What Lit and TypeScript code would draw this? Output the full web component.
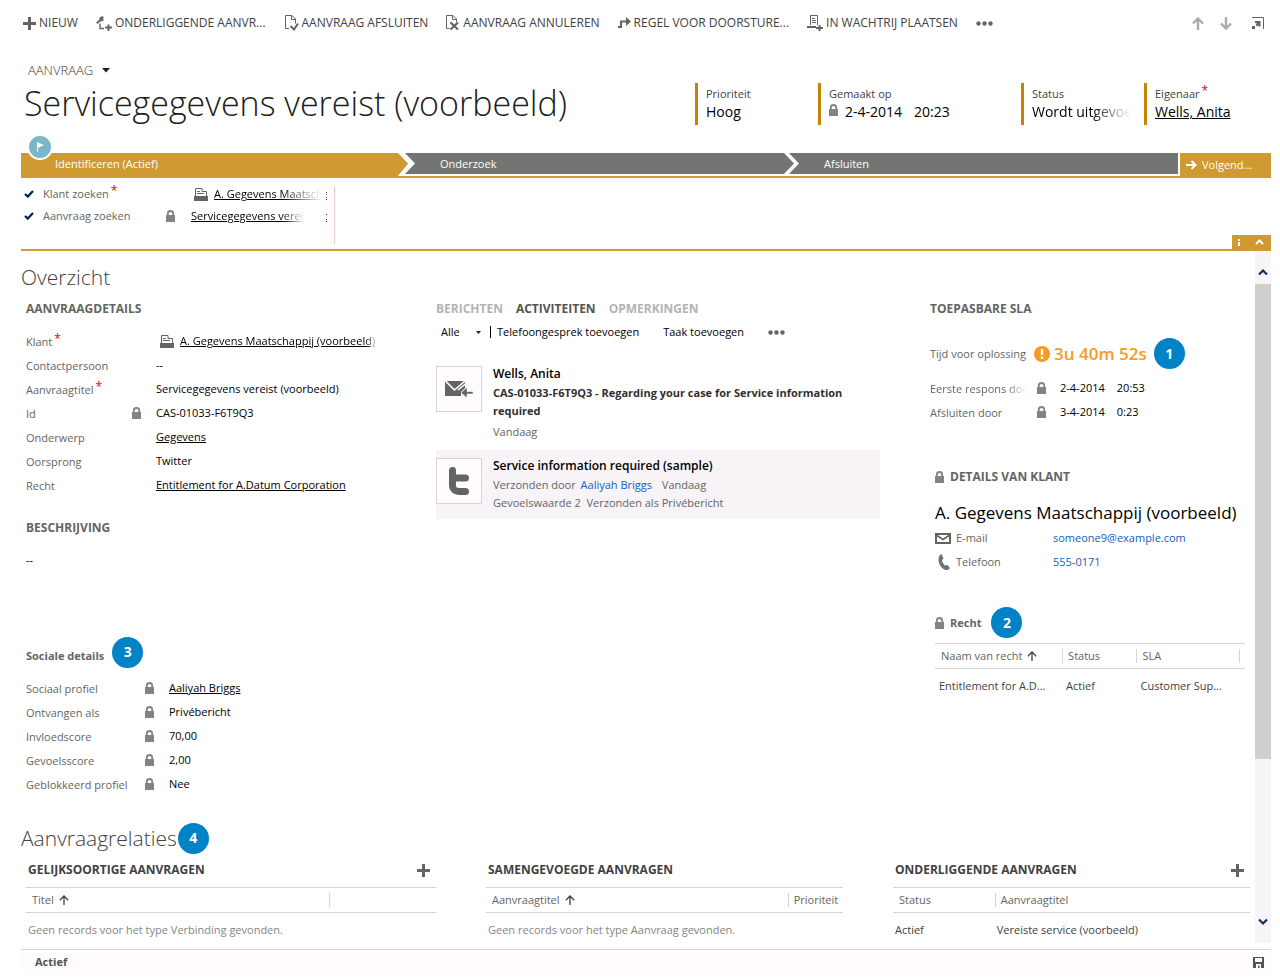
import { LitElement, html, css, svg, nothing, TemplateResult } from "lit";
import { customElement, property } from "lit/decorators.js";
import { classMap } from "lit/directives/class-map.js";

const icons: Record<string, { w: number; h: number; body: TemplateResult }> = {
  plus: { w: 13, h: 13, body: svg`<path d="M5 0h3v5h5v3H8v5H5V8H0V5h5z" fill="#636563"/>` },
  child: {
    w: 16, h: 15,
    body: svg`<path d="M6.500 0 8 1.800 6.200 3.200 8.500 3.500 6.500 5.200 4.500 5.200 1.500 8 0 6.500 3.200 3.700 3.500 1.500z" fill="#636563"/><path d="M4 7.500v5h4" fill="none" stroke="#636563" stroke-width="1.400"/><path d="M11.500 8.500h2v2H16v2h-2.500V15h-2v-2.500H9v-2h2.500z" fill="#636563"/>`,
  },
  close: {
    w: 15, h: 16,
    body: svg`<path d="M5 13.500H1.500V.500H8l3.500 3.500v4.500M7.500.500v4h4" fill="none" stroke="#636563"/><path d="M6.500 11l3.500 3.500 4-6" fill="none" stroke="#636563" stroke-width="2"/>`,
  },
  cancel: {
    w: 14, h: 16,
    body: svg`<path d="M3.500 13.500h-3V.500H7l3.500 3.500v3M6.500.500v4h4" fill="none" stroke="#636563"/><path d="M4.500 7.500l7.500 7M12 7.500l-7.500 7" fill="none" stroke="#636563" stroke-width="2.200"/>`,
  },
  route: {
    w: 13, h: 12,
    body: svg`<path d="M0 10h3V4.500h6" fill="none" stroke="#636563" stroke-width="2"/><path d="M8 0l5 4.500-5 4.500z" fill="#636563"/>`,
  },
  queue: {
    w: 16, h: 16,
    body: svg`<path d="M3.500 10V.500h7v9.500M5 3.500h3M5 5.500h4M5 7.500h4" fill="none" stroke="#636563"/><path d="M0 11h9v2H0zM11.500 10h2v2H16v2h-2.500v2h-2v-2H9v-2h2.500z" fill="#636563"/>`,
  },
  dots: {
    w: 17, h: 5,
    body: svg`<g fill="#636563"><circle cx="2.500" cy="2.500" r="2.200"/><circle cx="8.500" cy="2.500" r="2.200"/><circle cx="14.500" cy="2.500" r="2.200"/></g>`,
  },
  up: { w: 12, h: 13, body: svg`<path d="M6 13V2M1 6.500 6 1.500l5 5" fill="none" stroke="#adaaad" stroke-width="2.400"/>` },
  down: { w: 12, h: 13, body: svg`<path d="M6 0v11M1 6.500l5 5 5-5" fill="none" stroke="#adaaad" stroke-width="2.400"/>` },
  popout: {
    w: 12, h: 12,
    body: svg`<path d="M0 .500h11.500V12" fill="none" stroke="#636563"/><path d="M3 4h5.500v5.500H6.500V8L5 9.500 3.500 8 5 6.500 3 6zM0 9h3v3H0z" fill="#636563"/>`,
  },
  caret: { w: 8, h: 5, body: svg`<path d="M0 0h8L4 4.500z" fill="#212021"/>` },
  caretSmall: { w: 5, h: 3, body: svg`<path d="M0 0h5L2.500 3z" fill="#212021"/>` },
  lock: {
    w: 9, h: 12,
    body: svg`<path d="M1.800 6V3.500a2.700 2.500 0 0 1 5.400 0V6" fill="none" stroke="#848284" stroke-width="1.800"/><path d="M0 5h9v7H0z" fill="#848284"/>`,
  },
  account: {
    w: 14, h: 13,
    body: svg`<path d="M1.500 8V.500H8v3h4.500V8M3 3.500h3M3 5.500h7" fill="none" stroke="#636563"/><path d="M0 8h14v5H0z" fill="#636563"/>`,
  },
  check: { w: 10, h: 8, body: svg`<path d="M1 4l2.800 2.600L9 1" fill="none" stroke="#00205a" stroke-width="2.200"/>` },
  flag: {
    w: 26, h: 26,
    body: svg`<circle cx="13" cy="13" r="13" fill="#fff"/><circle cx="13" cy="13" r="11" fill="#7bb6c6"/><path d="M10 8h1v10h-1zM11 8.500 17 11l-6 3z" fill="#fff"/>`,
  },
  next: { w: 11, h: 10, body: svg`<path d="M0 5h9M5.500 1l4 4-4 4" fill="none" stroke="#fff" stroke-width="2"/>` },
  info: { w: 2, h: 7, body: svg`<path d="M0 0h2v2H0zM0 3h2v4H0z" fill="#fff"/>` },
  collapse: { w: 9, h: 6, body: svg`<path d="M1 5l3.500-3.500L8 5" fill="none" stroke="#fff" stroke-width="2"/>` },
  scrollUp: { w: 10, h: 8, body: svg`<path d="M1 6.500l4-4 4 4" fill="none" stroke="#10305a" stroke-width="2.200"/>` },
  scrollDown: { w: 10, h: 8, body: svg`<path d="M1 1.500l4 4 4-4" fill="none" stroke="#10305a" stroke-width="2.200"/>` },
  sort: { w: 10, h: 10, body: svg`<path d="M5 10V1M.800 5.200 5 1l4.200 4.200" fill="none" stroke="#424142" stroke-width="1.300"/>` },
  mailIn: {
    w: 28, h: 17,
    body: svg`<path d="M0 0h20v7l-4 4v4H0z" fill="#636563"/><path d="M.500 0l9 9L20 0M13 9l8-6.500" fill="none" stroke="#fffbff" stroke-width="1.600"/><path d="M28 10.500h-6V6l-6 5.800 6 5.200v-4h6z" fill="#636563" stroke="#fffbff" stroke-width=".6"/>`,
  },
  twitter: {
    w: 20, h: 28,
    body: svg`<path d="M3.500 3.500v15a6 6 0 0 0 6 6H16.500M3.500 11H16.500" fill="none" stroke="#636563" stroke-width="7" stroke-linecap="round"/>`,
  },
  warn: {
    w: 16, h: 16,
    body: svg`<circle cx="8" cy="8" r="8" fill="#f79a21"/><path d="M6.800 3h2.400v6H6.800zM6.800 10.500h2.400v2.500H6.800z" fill="#fff"/>`,
  },
  mail: {
    w: 16, h: 11,
    body: svg`<path d="M1 1h14v9H1z" fill="none" stroke="#636563" stroke-width="2"/><path d="M2 2.500l6 4 6-4" fill="none" stroke="#636563" stroke-width="1.800"/>`,
  },
  phone: {
    w: 12, h: 16,
    body: svg`<path d="M3.500 0 5.500 4.500 4 6.500c.500 2 1.500 3.700 3 5l2-.800 3 3.300c-1 1.500-3 2.500-4.500 2C3 14 .500 10 .500 5.500.500 3 1.500.800 3.500 0z" fill="#737173"/>`,
  },
  save: {
    w: 11, h: 11,
    body: svg`<path d="M0 0h11v11H0z" fill="#525552"/><path d="M2 1h7v4H2zM3 7h5v4H6.500V8.500H5V11H3z" fill="#fffbff"/>`,
  },
};

const icon = (name: string) => {
  const i = icons[name];
  return html`<svg class="icon" width=${i.w} height=${i.h} viewBox="0 0 ${i.w} ${i.h}" aria-hidden="true">${i.body}</svg>`;
};

const shared = css`
  * { box-sizing: border-box; }
  .icon { display: block; flex: none; }
  button, select {
    margin: 0; padding: 0; border: 0; background: none;
    font: inherit; color: inherit; appearance: none; white-space: nowrap;
  }
  a { color: inherit; }
  h1, h2, h3, p, dl, dd, dt, ul, figure { margin: 0; padding: 0; }
  .req { color: #f00000; font-size: 12px; line-height: 10px; vertical-align: 3px; margin-left: 2px; }
`;

@customElement("step-badge")
class StepBadge extends LitElement {
  static styles = css`
    :host {
      display: inline-flex; align-items: center; justify-content: center; flex: none;
      width: 31px; height: 31px; border-radius: 50%;
      background: #0082c6; color: #fff; font-size: 14px; line-height: 18px; font-weight: 700;
    }
  `;
  render() { return html`<slot></slot>`; }
}

interface Column { label: string; width: string; sorted?: boolean; }

@customElement("record-grid")
class RecordGrid extends LitElement {
  @property({ attribute: false }) columns: Column[] = [];
  @property({ attribute: false }) rows: string[][] = [];
  @property() empty = "";
  @property({ type: Boolean }) trailing = false;

  static styles = [shared, css`
    :host { display: block; }
    table { width: 100%; table-layout: fixed; border-collapse: separate; border-spacing: 0; }
    th {
      height: 26px; padding: 0; text-align: left; font-weight: 400; color: #636563;
      border-top: 1px solid #d6d3d6; border-bottom: 1px solid #d6d3d6;
    }
    .head { display: flex; align-items: center; gap: 5px; height: 14px; padding-left: 5px; border-left: 1px solid transparent; white-space: nowrap; }
    .split { border-left-color: #d6d3d6; }
    .end { border-right: 1px solid #d6d3d6; margin-right: 5px; }
    td { height: 34px; padding: 0 4px 0 2px; color: #424142; overflow: hidden; white-space: nowrap; text-overflow: ellipsis; }
    .inset td { padding-left: 4px; }
    td.none { color: #848684; }
  `];

  render() {
    return html`
      <table class=${classMap({ inset: this.trailing })}>
        <colgroup>${this.columns.map((c) => html`<col style="width:${c.width}">`)}</colgroup>
        <thead><tr>${this.columns.map((c, i) => html`
          <th scope="col"><span class=${classMap({ head: true, split: i > 0, end: this.trailing && i === this.columns.length - 1 })}>${c.label}${c.sorted ? icon("sort") : nothing}</span></th>`)}
        </tr></thead>
        <tbody>
          ${this.rows.map((r) => html`<tr>${r.map((v) => html`<td>${v}</td>`)}</tr>`)}
          ${this.empty ? html`<tr><td class="none" colspan=${this.columns.length}>${this.empty}</td></tr>` : nothing}
        </tbody>
      </table>`;
  }
}

interface Field { label: string; value: string; required?: boolean; locked?: boolean; link?: boolean; account?: boolean; }

const caseFields: Field[] = [
  { label: "Klant", value: "A. Gegevens Maatschappij (voorbeeld)", required: true, link: true, account: true },
  { label: "Contactpersoon", value: "--" },
  { label: "Aanvraagtitel", value: "Servicegegevens vereist (voorbeeld)", required: true },
  { label: "Id", value: "CAS-01033-F6T9Q3", locked: true },
  { label: "Onderwerp", value: "Gegevens", link: true },
  { label: "Oorsprong", value: "Twitter" },
  { label: "Recht", value: "Entitlement for A.Datum Corporation", link: true },
];

const socialFields: Field[] = [
  { label: "Sociaal profiel", value: "Aaliyah Briggs", locked: true, link: true },
  { label: "Ontvangen als", value: "Privébericht", locked: true },
  { label: "Invloedscore", value: "70,00", locked: true },
  { label: "Gevoelsscore", value: "2,00", locked: true },
  { label: "Geblokkeerd profiel", value: "Nee", locked: true },
];

const commands = [
  ["plus", "NIEUW"],
  ["child", "ONDERLIGGENDE AANVR..."],
  ["close", "AANVRAAG AFSLUITEN"],
  ["cancel", "AANVRAAG ANNULEREN"],
  ["route", "REGEL VOOR DOORSTURE..."],
  ["queue", "IN WACHTRIJ PLAATSEN"],
];

@customElement("app-root")
class AppRoot extends LitElement {
  static styles = [shared, css`
    :host {
      display: flex; flex-direction: column; height: 100vh; overflow: hidden;
      padding: 0 9px 3px 21px; background: #fff; color: #000;
      font-family: "Open Sans", "Noto Sans", sans-serif; font-size: 11px; line-height: 18px;
      box-sizing: border-box;
    }

    .commands { display: flex; align-items: center; flex: none; height: 46px; padding: 0 7px 0 2px; gap: 18px; color: #424142; font-size: 12px; }
    .command { display: flex; align-items: center; gap: 3px; }
    .paging { display: flex; align-items: center; gap: 16px; margin-left: auto; }
    .paging button:last-child { margin-left: 4px; }

    .header { display: flex; justify-content: space-between; flex: none; height: 107px; padding-top: 15px; }
    .kind { display: flex; align-items: center; gap: 8px; padding-left: 7px; color: #424142; font-size: 13px; font-weight: 300; }
    .title { padding-left: 3px; font-size: 34px; line-height: 48px; font-weight: 300; color: #212021; white-space: nowrap; }
    .facts { display: grid; grid-template-columns: 123px 203px 123px 127px; margin-top: 22px; height: 42px; }
    .fact { border-left: 3px solid #c68200; padding: 2px 13px 0 8px; min-width: 0; color: #424142; }
    .fact-value { display: flex; gap: 7px; font-size: 14px; color: #000; white-space: nowrap; overflow: hidden; }
    .fact-value .icon { margin-top: 1px; }
    .fade { mask-image: linear-gradient(to right, #000 calc(100% - 40px), transparent); }

    .process {
      position: relative; display: grid; grid-template-columns: 377fr 384fr 396fr auto; align-items: start;
      flex: none; height: 25px; border-bottom: 2px solid #ce9a31; color: #fff;
    }
    .flag { position: absolute; left: 6px; top: -19px; }
    .stage { display: flex; height: 21px; align-items: center; background: #737573; }
    .stage.active { height: 23px; padding: 0 0 2px 34px; background: #ce9a31; }
    .chevron { display: block; flex: none; align-self: flex-start; margin-right: 25px; }
    .next { display: flex; align-items: center; gap: 5px; width: 91px; height: 23px; margin-left: 2px; padding-left: 6px; background: #ce9a31; }

    .stage-panel { display: flex; justify-content: space-between; align-items: flex-end; flex: none; height: 73px; border-bottom: 2px solid #ce9a31; }
    .steps { align-self: flex-start; width: 314px; height: 57px; margin-top: 9px; padding: 0 7px 0 3px; border-right: 1px dotted #deb25a; }
    .step { display: grid; grid-template-columns: 19px 123px 1fr; align-items: center; height: 22px; margin-top: -4px; color: #636563; }
    .step + .step { margin-top: 0; }
    .step-value { display: flex; align-items: center; color: #000; min-width: 0; }
    .step-value .icon { margin-right: 16px; }
    .step-value.inset { padding-left: 28px; }
    .step-value.inset .icon { margin-right: 6px; }
    .cut { --end: 22px; flex: 1; overflow: hidden; white-space: nowrap; mask-image: linear-gradient(to right, #000 calc(100% - 45px), transparent calc(100% - var(--end)), transparent calc(100% - 1px), #000 calc(100% - 1px)); }
    .inset .cut { --end: 5px; }
    .tools { display: flex; align-items: center; justify-content: space-between; width: 39px; height: 14px; padding: 0 7px 0 6px; background: #ce9a31; }
    .tools button { display: block; }

    .body { display: flex; flex: 1; min-height: 0; margin-bottom: 6px; }
    .form { flex: 1; min-width: 0; overflow: auto; scrollbar-width: none; padding-top: 11px; }
    .scroll { display: flex; flex-direction: column; align-items: center; flex: none; width: 16px; background: #f7f3f7; }
    .scroll-up { display: flex; justify-content: center; height: 33px; padding-top: 17px; }
    .thumb { flex: 475 1 0; width: 16px; background: #cecfce; }
    .scroll-rest { display: flex; align-items: flex-end; flex: 167 1 0; margin-bottom: 17px; }

    .section { display: flex; align-items: center; height: 30px; font-size: 21px; line-height: 30px; font-weight: 300; color: #424142; }
    .section step-badge { margin-left: 1px; }
    .overview { display: grid; grid-template-columns: 410fr 494fr 325fr; padding: 8px 0 0 5px; }
    .caption { display: flex; align-items: center; height: 18px; font-size: 12px; font-weight: 700; color: #636563; white-space: nowrap; }
    .caption.small { font-size: 11px; }
    .fields { margin-top: 11px; }
    .field { display: grid; grid-template-columns: 106px 24px 1fr; align-items: center; height: 24px; }
    .social .field { grid-template-columns: 119px 24px 1fr; }
    .field dt { color: #636563; white-space: nowrap; padding-top: 1px; }
    .value { display: flex; gap: 6px; align-items: center; min-width: 0; white-space: nowrap; }
    .value.clip { width: 224px; padding-left: 4px; overflow: hidden; mask-image: linear-gradient(to right, #000 calc(100% - 15px), transparent); }
    .description { margin-top: 22px; }
    .description-text { margin-top: 14px; }
    .social { margin-top: 78px; }
    .social step-badge { margin: -8px 0 0 8px; }

    .activities { padding-right: 50px; min-width: 0; }
    .tabs { display: flex; gap: 13px; height: 18px; font-size: 12px; font-weight: 700; color: #b5b2b5; }
    .tabs .on { color: #525552; }
    .filters { display: flex; align-items: center; height: 18px; margin: 5px 0 17px; padding-left: 5px; }
    .filters select { margin-right: 16px; }
    .bar { width: 1px; height: 12px; margin: 0 6px 0 9px; background: #000; }
    .filters button + button { margin-left: 24px; }
    .activity { display: flex; gap: 11px; padding: 7px 0; }
    .activity + .activity { margin-top: 2px; background: #f7f3f7; }
    .tile { display: flex; align-items: center; justify-content: center; flex: none; width: 46px; height: 46px; margin-top: 1px; border: 1px solid #d6d3d6; background: #fffbff; }
    .who { margin-bottom: 1px; font-size: 12px; font-weight: 600; }
    .subject { color: #313031; font-weight: 700; }
    .meta { color: #636563; }
    .meta.first { margin-top: 3px; }
    .meta a { color: #1061bd; text-decoration: none; margin: 0 7px 0 2px; }

    .side { min-width: 0; padding-right: 10px; }
    .timer-row { display: flex; align-items: center; height: 31px; margin-top: 20px; color: #636563; white-space: nowrap; }
    .timer-row .icon { margin: 0 4px 0 8px; }
    .timer { color: #f79a21; font-size: 17px; font-weight: 600; }
    .timer-row step-badge { margin-left: 7px; }
    .sla { margin-top: 7px; }
    .sla .field { grid-template-columns: 107px 23px 1fr; }
    .sla dt { width: 97px; overflow: hidden; }
    .sla .fade { mask-image: linear-gradient(to right, #000 calc(100% - 20px), transparent); }
    .when { display: flex; gap: 12px; }
    .customer { padding-left: 5px; margin-top: 44px; }
    .lead { gap: 6px; }
    .customer-name { margin-top: 14px; font-size: 17px; line-height: 26px; white-space: nowrap; }
    .contact { display: grid; grid-template-columns: 21px 97px 1fr; align-items: center; height: 24px; color: #636563; }
    .contact a { color: #1061bd; text-decoration: none; }
    .phone { padding-left: 3px; }
    .entitlement { padding-left: 5px; margin-top: 33px; }
    .entitlement .caption { height: 31px; }
    .entitlement step-badge { margin-left: 4px; }
    .entitlement record-grid { margin-top: 5px; }

    .related { display: grid; grid-template-columns: 410fr 357fr 357fr; column-gap: 50px; padding: 8px 5px 0; }
    .related .caption { justify-content: space-between; padding: 0 6px 0 2px; color: #424142; }
    .related record-grid { margin-top: 8px; }
    .relations { margin-top: 27px; }

    .status { display: flex; align-items: center; justify-content: space-between; flex: none; height: 25px; padding: 0 7px 0 14px; border-top: 1px solid #d6d3d6; background: #fffbff; color: #525552; font-weight: 700; }
  `];

  private value(f: Field) {
    return html`<dd class=${classMap({ value: true, clip: !!f.account })}>
      ${f.account ? icon("account") : nothing}${f.link ? html`<a href="#">${f.value}</a>` : f.value}</dd>`;
  }

  private field(f: Field) {
    return html`<div class="field">
      <dt>${f.label}${f.required ? html`<span class="req">*</span>` : nothing}</dt>
      <span>${f.locked ? icon("lock") : nothing}</span>${this.value(f)}
    </div>`;
  }

  private chevron(from: string, height: number, thick: number) {
    const mid = 10.5;
    return html`<svg class="chevron" width="17" height=${height} viewBox="0 0 17 ${height}" aria-hidden="true">
      <path d="M0 0H${7 - thick}L${17 - thick} ${mid}L${7 - thick} ${height}H0z" fill=${from}/>
      <path d="M${7 - thick} 0H7L17 ${mid}L7 21V${height}H${7 - thick}L${17 - thick} ${mid}z" fill="#fff"/>
    </svg>`;
  }

  render() {
    return html`
      <nav class="commands">
        ${commands.map(([i, t]) => html`<button class="command">${icon(i)}<span>${t}</span></button>`)}
        <button aria-label="Meer opdrachten">${icon("dots")}</button>
        <div class="paging">
          <button aria-label="Vorige">${icon("up")}</button>
          <button aria-label="Volgende">${icon("down")}</button>
          <button aria-label="Nieuw venster">${icon("popout")}</button>
        </div>
      </nav>

      <header class="header">
        <div>
          <div class="kind"><select aria-label="Formulier"><option>AANVRAAG</option></select>${icon("caret")}</div>
          <h1 class="title">Servicegegevens vereist (voorbeeld)</h1>
        </div>
        <div class="facts">
          <div class="fact">Prioriteit<div class="fact-value">Hoog</div></div>
          <div class="fact">Gemaakt op<div class="fact-value">${icon("lock")}<span class="when"><span>2-4-2014</span><span>20:23</span></span></div></div>
          <div class="fact">Status<div class="fact-value fade">Wordt uitgevoerd</div></div>
          <div class="fact">Eigenaar<span class="req">*</span><div class="fact-value"><a href="#">Wells, Anita</a></div></div>
        </div>
      </header>

      <div class="process">
        <div class="stage active">Identificeren (Actief)</div>
        <div class="stage">${this.chevron("#ce9a31", 23, 7)}Onderzoek</div>
        <div class="stage">${this.chevron("#737573", 21, 5)}Afsluiten</div>
        <button class="next">${icon("next")}Volgend...</button>
        <div class="flag">${icon("flag")}</div>
      </div>

      <div class="stage-panel">
        <div class="steps">
          <div class="step">${icon("check")}<span>Klant zoeken<span class="req">*</span></span>
            <span class="step-value inset">${icon("account")}<a class="cut" href="#">A. Gegevens Maatschappij (voorbeeld)</a></span></div>
          <div class="step">${icon("check")}<span>Aanvraag zoeken</span>
            <span class="step-value">${icon("lock")}<a class="cut" href="#">Servicegegevens vereist (voorbeeld)</a></span></div>
        </div>
        <div class="tools"><button aria-label="Info">${icon("info")}</button><button aria-label="Samenvouwen">${icon("collapse")}</button></div>
      </div>

      <main class="body">
        <div class="form">
          <h2 class="section">Overzicht</h2>
          <div class="overview">
            <section>
              <h3 class="caption">AANVRAAGDETAILS</h3>
              <dl class="fields">${caseFields.map((f) => this.field(f))}</dl>
              <h3 class="caption description">BESCHRIJVING</h3>
              <p class="description-text">--</p>
              <div class="social">
                <h3 class="caption small">Sociale details<step-badge>3</step-badge></h3>
                <dl class="fields">${socialFields.map((f) => this.field(f))}</dl>
              </div>
            </section>

            <section class="activities">
              <div class="tabs"><button>BERICHTEN</button><button class="on">ACTIVITEITEN</button><button>OPMERKINGEN</button></div>
              <div class="filters">
                <select aria-label="Filter"><option>Alle</option></select>${icon("caretSmall")}
                <span class="bar"></span>
                <button>Telefoongesprek toevoegen</button><button>Taak toevoegen</button>
                <button aria-label="Meer">${icon("dots")}</button>
              </div>
              <article class="activity">
                <span class="tile">${icon("mailIn")}</span>
                <div>
                  <p class="who">Wells, Anita</p>
                  <p class="subject">CAS-01033-F6T9Q3 - Regarding your case for Service information required</p>
                  <p class="meta first">Vandaag</p>
                </div>
              </article>
              <article class="activity">
                <span class="tile">${icon("twitter")}</span>
                <div>
                  <p class="who">Service information required (sample)</p>
                  <p class="meta">Verzonden door <a href="#">Aaliyah Briggs</a> Vandaag</p>
                  <p class="meta">Gevoelswaarde 2 &nbsp;Verzonden als Privébericht</p>
                </div>
              </article>
            </section>

            <section class="side">
              <h3 class="caption">TOEPASBARE SLA</h3>
              <div class="timer-row">Tijd voor oplossing${icon("warn")}<span class="timer">3u 40m 52s</span><step-badge>1</step-badge></div>
              <dl class="sla">
                <div class="field"><dt class="fade">Eerste respons door</dt>${icon("lock")}<dd class="when"><span>2-4-2014</span><span>20:53</span></dd></div>
                <div class="field"><dt>Afsluiten door</dt>${icon("lock")}<dd class="when"><span>3-4-2014</span><span>0:23</span></dd></div>
              </dl>
              <div class="customer">
                <h3 class="caption lead">${icon("lock")}DETAILS VAN KLANT</h3>
                <p class="customer-name">A. Gegevens Maatschappij (voorbeeld)</p>
                <div class="contact">${icon("mail")}<span>E-mail</span><a href="#">someone9@example.com</a></div>
                <div class="contact"><span class="phone">${icon("phone")}</span><span>Telefoon</span><a href="#">555-0171</a></div>
              </div>
              <div class="entitlement">
                <h3 class="caption small lead">${icon("lock")}Recht<step-badge>2</step-badge></h3>
                <record-grid trailing
                  .columns=${[{ label: "Naam van recht", width: "41%", sorted: true }, { label: "Status", width: "24%" }, { label: "SLA", width: "35%" }]}
                  .rows=${[["Entitlement for A.D...", "Actief", "Customer Sup..."]]}></record-grid>
              </div>
            </section>
          </div>

          <h2 class="section relations">Aanvraagrelaties<step-badge>4</step-badge></h2>
          <div class="related">
            <section>
              <h3 class="caption">GELIJKSOORTIGE AANVRAGEN<button aria-label="Toevoegen">${icon("plus")}</button></h3>
              <record-grid .columns=${[{ label: "Titel", width: "74%", sorted: true }, { label: "", width: "26%" }]}
                empty="Geen records voor het type Verbinding gevonden."></record-grid>
            </section>
            <section>
              <h3 class="caption">SAMENGEVOEGDE AANVRAGEN</h3>
              <record-grid .columns=${[{ label: "Aanvraagtitel", width: "84.500%", sorted: true }, { label: "Prioriteit", width: "15.500%" }]}
                empty="Geen records voor het type Aanvraag gevonden."></record-grid>
            </section>
            <section>
              <h3 class="caption">ONDERLIGGENDE AANVRAGEN<button aria-label="Toevoegen">${icon("plus")}</button></h3>
              <record-grid .columns=${[{ label: "Status", width: "28.500%" }, { label: "Aanvraagtitel", width: "71.500%" }]}
                .rows=${[["Actief", "Vereiste service (voorbeeld)"]]}></record-grid>
            </section>
          </div>
        </div>
        <div class="scroll" aria-hidden="true">
          <span class="scroll-up">${icon("scrollUp")}</span>
          <span class="thumb"></span>
          <span class="scroll-rest">${icon("scrollDown")}</span>
        </div>
      </main>

      <footer class="status">Actief<button aria-label="Opslaan">${icon("save")}</button></footer>
    `;
  }
}
